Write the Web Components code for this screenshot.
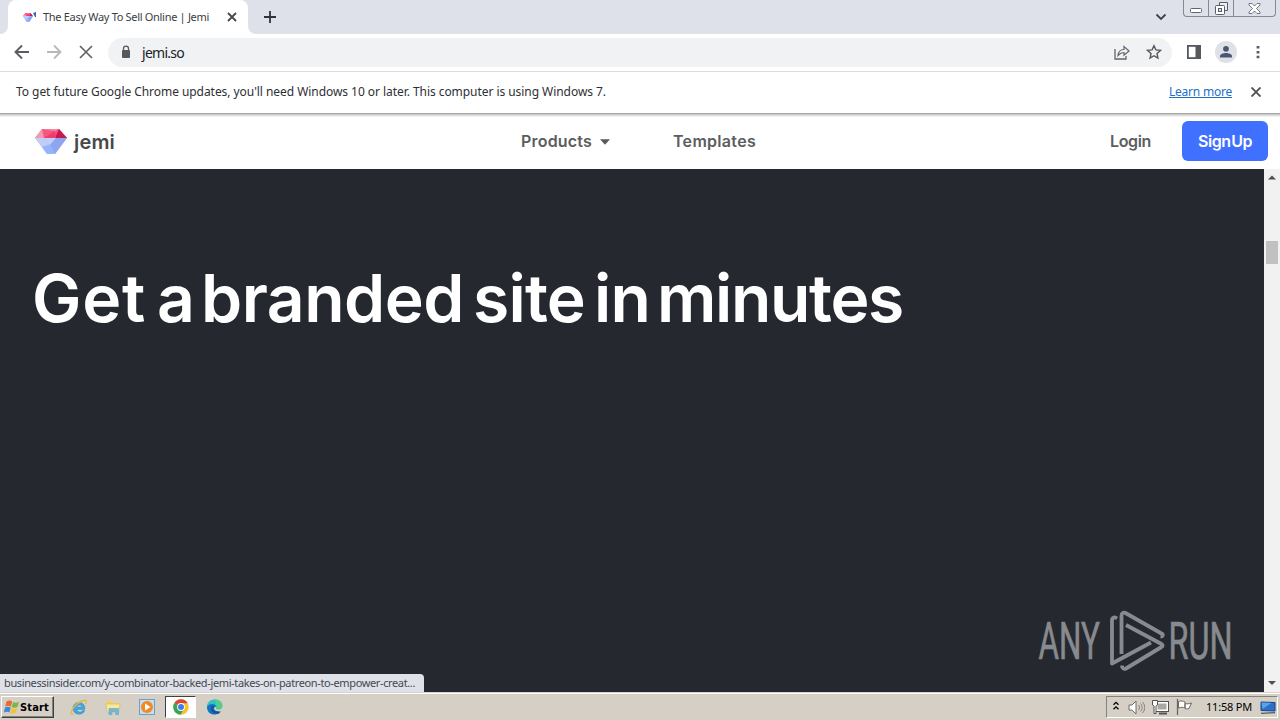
<!DOCTYPE html>
<html lang="en">
<head>
<meta charset="utf-8">
<title>The Easy Way To Sell Online | Jemi</title>
<style>
    body{
        margin: 0;
        width: 1280px;
        height: 720px;
        overflow: hidden;
        font-family: "Noto Sans", "DejaVu Sans", sans-serif;
        background: #fff;
    }
</style>
</head>
<body>
<desktop-screen>
    <browser-tabs>The Easy Way To Sell Online | Jemi</browser-tabs>
    <browser-toolbar>jemi.so</browser-toolbar>
    <info-bar></info-bar>
    <site-nav></site-nav>
    <site-hero>
        <fit-text width="114">Get</fit-text>
        <fit-text width="33">a</fit-text>
        <fit-text width="263">branded</fit-text>
        <fit-text width="112">site</fit-text>
        <fit-text width="56">in</fit-text>
        <fit-text width="246">minutes</fit-text>
    </site-hero>
    <task-bar></task-bar>
</desktop-screen>

<script>
// text run that spreads its letters over a given width
class FitText extends HTMLElement{
    constructor(){
        super();
        this.attachShadow({mode : 'open'});
        this.shadowRoot.innerHTML = `
            <style>
                :host{ display: block; flex: none; white-space: nowrap; }
                span{ display: inline-block; text-decoration: inherit; }
            </style>
            <span><slot></slot></span>
        `;
    }
    connectedCallback(){
        const span = this.shadowRoot.querySelector('span');
        const width = Number(this.getAttribute('width'));
        const slot = this.shadowRoot.querySelector('slot');
        const fit = () => {
            span.style.letterSpacing = '0px';
            const text = (this.getAttribute('chars') || this.textContent.trim()).length;
            const natural = span.getBoundingClientRect().width;
            if(natural && text) span.style.letterSpacing = (width - natural) / text + 'px';
            this.style.width = width + 'px';
        };
        slot.addEventListener('slotchange', fit);
        requestAnimationFrame(fit);
        fit();
    }
}

function define(name, html){
    const template = document.createElement('template');
    template.innerHTML = html;
    window.customElements.define(name, class extends HTMLElement{
        constructor(){
            super();
            this.attachShadow({mode : 'open'});
            this.shadowRoot.appendChild(template.content.cloneNode(true));
        }
    });
}

define('desktop-screen', `
    <style>
        :host{
            display: grid;
            grid-template-rows: 34px 38px 43px 54px 523px 28px;
            width: 1280px;
            height: 720px;
        }
    </style>
    <slot></slot>
`);

define('gem-icon', `
    <style>
        :host{ display: block; }
        svg{ display: block; width: 100%; height: 100%; }
    </style>
    <svg viewBox="0 0 32 25" preserveAspectRatio="none">
        <path d="M7 0h17l8 9H0z" fill="#f5577f"/>
        <path d="M7 0l2 9H0z" fill="#f39ab0"/>
        <path d="M7 0h17l-4 2z" fill="#f58aa5"/>
        <path d="M24 0l8 9H20z" fill="#c9184f"/>
        <path d="M20 2l-11 7h12z" fill="#ee3c6c"/>
        <path d="M0 9h32L20 25h-8z" fill="#a9bdf8"/>
        <path d="M0 9h9l5 6-7 3z" fill="#c3cdf4"/>
        <path d="M9 9h12l-6 7z" fill="#c0d0fb"/>
        <path d="M32 9L20 25l-5-9 6-7z" fill="#8ea5f0"/>
        <path d="M15 16l5 9h-8l-5-7z" fill="#94b5fb"/>
    </svg>
`);

define('browser-tabs', `
    <style>
        :host{ display: flex; background: #dee1e9; color: #3a3d42; }
        .before{ flex: none; width: 8px; background: #fff; }
        .before i{ display: block; height: 34px; background: #dee1e9; border-radius: 0 0 8px 0; }
        .tab{
            display: flex;
            align-items: center;
            box-sizing: border-box;
            width: 240px;
            padding-left: 15px;
            background: #fff;
            border-radius: 8px 8px 0 0;
            font-size: 11px;
        }
        .tab fit-text{ margin-top: -1px; }
        .tab gem-icon{ width: 10px; height: 9px; }
        .spark{ width: 4px; height: 6px; margin: -5px 6px 0 0; }
        .close{ margin-left: 18px; }
        .edge{ flex: none; background: #fff; width: 8px; }
        .edge i{ display: block; height: 34px; background: #dee1e9; border-radius: 0 0 0 8px; }
        .plus{ margin: 11px 0 0 8px; }
        .down{ margin: 13px 0 0 auto; }
        .win{
            display: flex;
            width: 91px;
            height: 16px;
            margin: 0 4px 0 16px;
            border: 1px solid #858890;
            border-top: 0;
            border-radius: 0 0 4px 4px;
        }
        .win div{ display: flex; justify-content: center; align-items: center; width: 24px; border-right: 1px solid #858890; }
        .win div:last-child{ flex: 1; border: 0; }
    </style>
    <div class="before"><i></i></div>
    <div class="tab">
        <gem-icon></gem-icon>
        <svg class="spark" viewBox="0 0 4 6"><path d="M0 1l3-1v5H2z" fill="#3569b8"/></svg>
        <fit-text width="166" chars="The Easy Way To Sell Online | Jemi"><slot></slot></fit-text>
        <svg class="close" width="10" height="10"><path d="M1 1l8 8M9 1l-8 8" stroke="#45484c" stroke-width="1.8"/></svg>
    </div>
    <div class="edge"><i></i></div>
    <svg class="plus" width="12" height="12"><path d="M6 0v12M0 6h12" stroke="#303338" stroke-width="1.8"/></svg>
    <svg class="down" width="12" height="8"><path d="M1.500 1.500L6 6l4.500-4.500" fill="none" stroke="#404348" stroke-width="1.8"/></svg>
    <div class="win">
        <div><svg width="12" height="5" style="margin-top:5px"><rect x=".5" y=".5" width="11" height="4" rx="1" fill="#fff" stroke="#60636c"/></svg></div>
        <div><svg width="13" height="13"><path d="M4.500 3.500v-3h8v8h-3" fill="#eceef2" stroke="#5a5d66"/><rect x=".5" y="3.500" width="9" height="9" rx="1" fill="#fff" stroke="#5a5d66"/><rect x="3.500" y="6.500" width="3" height="3" fill="#dee1e9" stroke="#5a5d66"/></svg></div>
        <div><svg width="13" height="11"><path d="M1 .5h3l2.500 2.500L9 .5h3v1.500L8.500 5.500 12 9v1.500H9L6.500 8 4 10.500H1V9l3.500-3.500L1 2z" fill="#fff" stroke="#666973" stroke-width=".9"/></svg></div>
    </div>
`);

define('browser-toolbar', `
    <style>
        :host{
            display: flex;
            align-items: center;
            box-sizing: border-box;
            padding: 0 13px 1px 14px;
            border-bottom: 1px solid #dcdde0;
            background: #fff;
            color: #202226;
        }
        .nav{ margin-right: 16px; }
        .address{
            display: flex;
            align-items: center;
            box-sizing: border-box;
            width: 1064px;
            height: 29px;
            margin-left: -2px;
            padding: 0 10px 0 12px;
            border-radius: 15px;
            background: #f0f2f4;
            font-size: 14px;
        }
        .address fit-text{ margin: 0 auto 0 10px; }
        .share{ margin-right: 16px; }
        .panel{ margin-left: 15px; }
        .avatar{ margin-left: 14px; }
        .menu{ margin-left: 19px; }
    </style>
    <svg class="nav" width="16" height="16"><path d="M15 8H2M8 1.500L1.500 8 8 14.500" fill="none" stroke="#5a5d61" stroke-width="1.900"/></svg>
    <svg class="nav" width="16" height="16"><path d="M1 8h13M8 1.500L14.500 8 8 14.500" fill="none" stroke="#b6b8bb" stroke-width="1.800"/></svg>
    <svg class="nav" width="16" height="16"><path d="M2 2l12 12M14 2L2 14" stroke="#5f6266" stroke-width="1.700"/></svg>
    <div class="address">
        <svg width="12" height="14"><rect x="2" y="5" width="8" height="8" rx="1" fill="#55585c"/><path d="M3.500 6V3.600a2.500 2.500 0 015 0V6" fill="none" stroke="#55585c" stroke-width="1.300"/></svg>
        <fit-text width="42" chars="jemi.so"><slot></slot></fit-text>
        <svg class="share" width="16" height="15"><path d="M1 4v10h11v-3" fill="none" stroke="#63666a" stroke-width="1.300"/><path d="M4 10.500C4.500 6.500 6.500 4.500 10 4.500V1.500l5 4.500-5 4.300V7.500c-2.500 0-4 .8-6 3z" fill="none" stroke="#63666a" stroke-width="1.200"/></svg>
        <svg width="16" height="16"><path d="M8 1.700l1.900 4.200 4.500.5-3.400 3.100.9 4.500L8 11.700 4.100 14l.9-4.500-3.400-3.100 4.500-.5z" fill="none" stroke="#55585c" stroke-width="1.400"/></svg>
    </div>
    <svg class="panel" width="14" height="14"><rect x=".9" y=".9" width="12.200" height="12.200" fill="#fff" stroke="#55585c" stroke-width="1.800"/><path d="M8.500 1H13v12H8.500z" fill="#55585c"/></svg>
    <svg class="avatar" width="22" height="22"><circle cx="11" cy="11" r="11" fill="#dee1e8"/><circle cx="11" cy="7.800" r="2.900" fill="#4a5672"/><path d="M5 16.500v-1.200C5 13 8.500 12 11 12s6 1 6 3.300v1.200z" fill="#4a5672"/></svg>
    <svg class="menu" width="4" height="14"><path d="M.6 1h2.800v2.500H.6zM.6 5.900h2.800v2.500H.6zM.6 10.800h2.800v2.500H.6z" fill="#5a5d61"/></svg>
`);

define('info-bar', `
    <style>
        :host{
            display: flex;
            align-items: center;
            box-sizing: border-box;
            padding: 0 19px 4px 16px;
            box-shadow: inset 0 -1px #c8c8c8, inset 0 -2px #aaa, 0 1px #e0e0e0, 0 2px #f1f1f1;
            position: relative;
            background: #fff;
            font-size: 12px;
            color: #2e3034;
        }
        .link{ margin-left: auto; color: #1f70c8; text-decoration: underline; }
        svg{ margin-left: 19px; }
    </style>
    <fit-text width="590">To get future Google Chrome updates, you'll need Windows 10 or later. This computer is using Windows 7.</fit-text>
    <fit-text class="link" width="63">Learn more</fit-text>
    <svg width="10" height="10"><path d="M.5 .5l9 9M9.500 .5l-9 9" stroke="#505356" stroke-width="1.900"/></svg>
`);

define('site-nav', `
    <style>
        :host{
            display: flex;
            align-items: center;
            box-sizing: border-box;
            padding: 0 12px 2px 35px;
            background: #fff;
            font: 600 16px/24px Inter, sans-serif;
            color: #5c5d60;
        }
        gem-icon{ width: 32px; height: 25px; margin-top: 1px; }
        .brand{ margin: 2px 0 0 7px; font-size: 20px; color: #47484b; }
        .products{ margin-left: 406px; }
        .caret{ margin: 1px 63px 0 8px; }
        .login{ margin-left: auto; }
        .sign{
            display: flex;
            justify-content: center;
            align-items: center;
            width: 86px;
            height: 40px;
            margin-left: 31px;
            border-radius: 6px;
            background: #4070ff;
            color: #fff;
            word-spacing: -3px;
        }
    </style>
    <gem-icon></gem-icon>
    <fit-text class="brand" width="41">jemi</fit-text>
    <fit-text class="products" width="71">Products</fit-text>
    <svg class="caret" width="10" height="6"><path d="M0 .3h10L5 5.800z" fill="#58595c"/></svg>
    <fit-text width="83">Templates</fit-text>
    <fit-text class="login" width="41">Login</fit-text>
    <div class="sign"><fit-text width="54">Sign Up</fit-text></div>
`);

define('scroll-bar', `
    <style>
        :host{ display: flex; flex-direction: column; align-items: center; width: 16px; background: #f1f1f1; }
        svg{ flex: none; display: block; }
        .up{ margin-top: 5px; }
        .thumb{ width: 12px; height: 23px; margin-top: 61px; background: #c1c1c1; }
        .down{ margin: auto 0 6px; }
    </style>
    <svg class="up" width="8" height="6"><path d="M0 5.500h8L4 1.500z" fill="#505050"/></svg>
    <div class="thumb"></div>
    <svg class="down" width="8" height="6"><path d="M0 1h8L4 5z" fill="#505050"/></svg>
`);

define('any-run', `
    <style>
        :host{ display: block; width: 220px; height: 76px; }
        svg{ display: block; }
        text{ font-family: Roboto, sans-serif; font-size: 51px; font-weight: 400; fill: #878a8e; stroke: #878a8e; stroke-width: .7px; }
    </style>
    <svg width="220" height="76" viewBox="1025 602 220 76">
        <text transform="translate(1038.500 659) scale(.615 1)">ANY</text>
        <g fill="none" stroke="#878a8e" stroke-width="3.800" stroke-linejoin="round">
            <path d="M1117 618.500c-3-2-5-1-5 2v43l39-21"/>
            <path d="M1121.500 654v-38c0-3 2-4 4-3l36 20.500c2 1 1.500 3-1 3"/>
            <path d="M1126 625l35.500 19c1.500 1 1.500 2 0 3l-35.500 21.500c-2 1-4 0-4-3"/>
        </g>
        <text transform="translate(1168.500 659) scale(.635 1)">RUN</text>
    </svg>
`);

define('site-hero', `
    <style>
        :host{ display: grid; grid-template-columns: 1264px 16px; position: relative; }
        .page{ box-sizing: border-box; padding: 89px 0 0 32px; background: #25282f; }
        h1{
            display: grid;
            grid-template-columns: 125px 44px 272px 121px 63px 246px;
            margin: 0;
            font: 600 66px/80px Inter, sans-serif;
            color: #fff;
        }
        any-run{ position: absolute; left: 1025px; top: 433px; }
        .status{
            position: absolute;
            left: 0;
            bottom: 0;
            box-sizing: border-box;
            width: 424px;
            height: 18px;
            padding-left: 4px;
            border-radius: 0 4px 0 0;
            background: #dee1e8;
            font-size: 11px;
            line-height: 18px;
            color: #45484e;
        }
    </style>
    <div class="page"><h1><slot></slot></h1></div>
    <scroll-bar></scroll-bar>
    <any-run></any-run>
    <div class="status"><fit-text width="411">businessinsider.com/y-combinator-backed-jemi-takes-on-patreon-to-empower-creat...</fit-text></div>
`);

define('task-bar', `
    <style>
        :host{
            display: flex;
            align-items: center;
            box-sizing: border-box;
            padding: 1px 2px 0 1px;
            border-top: 1px solid #d8d4cc;
            box-shadow: inset 0 1px #fff;
            background: #d5cfc6;
            font-size: 11px;
            color: #000;
        }
        .start{
            display: flex;
            align-items: center;
            box-sizing: border-box;
            width: 53px;
            height: 22px;
            padding-left: 2px;
            border: 1px solid;
            border-color: #fff #404040 #404040 #fff;
            box-shadow: inset -1px -1px #85827c;
            font: bold 11px "DejaVu Sans Condensed", "Noto Sans", sans-serif;
        }
        .app{ display: flex; justify-content: center; align-items: center; width: 34px; height: 22px; }
        .first{ margin-left: 8px; }
        .active{
            box-sizing: border-box;
            width: 31px;
            margin: 0 2px 0 1px;
            border: 1px solid;
            border-color: #404040 #fff #fff #404040;
            background: #fff;
        }
        .last{ width: 32px; }
        .tray{
            display: flex;
            align-items: center;
            box-sizing: border-box;
            width: 172px;
            height: 22px;
            margin-left: auto;
            padding-left: 6px;
            border: 1px solid;
            border-color: #85827c #fff #fff #85827c;
        }
        .tray fit-text{ margin: -1px 0 0 13px; }
    </style>
    <div class="start">
        <svg width="16" height="16"><path d="M2.500 2.500C5 .8 7 1.500 8.200 2.500L6.800 7.500C5 6.300 3 6.500 1.200 7.500z" fill="#ee6734"/><path d="M9 3c2 1.200 4 1 6-.3l-1.500 5C11.500 9 9.500 8.800 7.600 7.900z" fill="#79b943"/><path d="M1 8.500c2-1.200 4-1 5.700 0L5.300 13.500C4 12.500 2 12.300-.2 13.500z" fill="#3f88d0"/><path d="M7.500 8.900c2 1.200 4 1 5.900-.2L12 13.500c-2 1.500-4 1.200-5.900.4z" fill="#f4c33c"/></svg>
        <fit-text width="29">Start</fit-text>
    </div>
    <div class="app first"><svg width="18" height="17"><path d="M14.500 10.500H7c.4 3 4.500 3.200 5.500 1h2.300C13 17 3 16.500 3 9.200 3 1.500 15 1.500 15 9.500zM7 8h4.800C11.500 5.300 7.500 5.300 7 8z" fill="#43a6df" stroke="#237fb9" stroke-width=".4" fill-rule="evenodd"/><path d="M3.500 15C-3 17 5 3.500 13.500 1.500c3-.6 3.500 1 2 3.500" fill="none" stroke="#e5b83d" stroke-width="1.300"/></svg></div>
    <div class="app"><svg width="16" height="16"><path d="M1 2h6l1 2h6v3H1z" fill="#f3cf69"/><path d="M1 5h14l-1 8H2z" fill="#f9e79b" stroke="#d9b552" stroke-width=".6"/><path d="M4 15.500V9.500h9.500v6h-2.700v-3H6.800v3z" fill="#72b8dd" stroke="#559bc4" stroke-width=".5"/></svg></div>
    <div class="app"><svg width="16" height="16"><rect x=".5" y=".5" width="15" height="15" fill="#c4dff3" stroke="#69a0cc"/><circle cx="8" cy="8" r="6" fill="#f38a20"/><path d="M6 4.500l5.500 3.500L6 11.500z" fill="#fff"/></svg></div>
    <div class="app active"><svg width="16" height="16"><circle cx="8" cy="8" r="7.700" fill="#f5c52d"/><path d="M8 8L1.300 4.100A7.700 7.700 0 0114.700 4.200H8z" fill="#df4536"/><path d="M8 8L1.300 4.100A7.700 7.700 0 007.500 15.700L11 10z" fill="#37a455"/><circle cx="8" cy="8" r="3.900" fill="#fff"/><circle cx="8" cy="8" r="3" fill="#3f7fe5"/></svg></div>
    <div class="app last"><svg width="17" height="16"><path d="M1 9C0 2 7-1 12 1c4 1.600 5 5.500 4 7.800-1 2-4 2-6 1.300 1-4-4-5.800-9-1.100z" fill="#34bfc2"/><path d="M9 .3c4 0 7.500 3 7.400 6.500 0 2.800-3 4.200-6.200 3.300C11 6.500 9.500 2.500 9 .3z" fill="#55cc87"/><path d="M1 8c2-4 8-4 9.500-.6C6.500 8 7 13 14.500 12.500 10 18 1 16 1 8z" fill="#1272c5"/><path d="M6 7c-3 4 1 8 6 8 1.200-.5 2-1.500 2.700-2.500C9 13.500 5.500 10.500 8.500 7z" fill="#155397"/></svg></div>
    <div class="tray">
        <svg width="6" height="10" style="margin-top:-2px"><path d="M.5 3.800L3 1.300l2.500 2.500M.5 8.300L3 5.800l2.500 2.500" fill="none" stroke="#000" stroke-width="1.300"/></svg>
        <svg width="17" height="15" style="margin-left:9px"><path d="M1 5h3l4-4v13l-4-4H1z" fill="#fff" stroke="#6e6c68"/><path d="M10.500 5c1.300 1.500 1.300 3.500 0 5M12.500 3.500c2.200 2.300 2.200 5.700 0 8M14.500 2c3 3.500 3 7.500 0 11" fill="none" stroke="#77746e" stroke-width=".9"/></svg>
        <svg width="17" height="16" style="margin-left:7px"><rect x="4.500" y="3.500" width="11" height="8" fill="#aaa8a2" stroke="#fff" stroke-width="2"/><rect x="3.500" y="2.500" width="13" height="10" fill="none" stroke="#55534f"/><path d="M7 14.500h8" stroke="#55534f" stroke-width="2"/><path d="M.5 1.500h5V6L4 7v7.500H2V7L.5 6z" fill="#fff" stroke="#55534f"/></svg>
        <svg width="17" height="16" style="margin-left:7px"><path d="M2.500 2.500C5 1.500 7 2 9 3v6C7 8 5 8.200 2.500 9zM9 4.500c2 .6 4 .4 6.500-.5L13 9.500c-1.500.6-3 .5-4 0z" fill="#fff" stroke="#6b6964"/><path d="M1.500 0v16" stroke="#6b6964" stroke-width="1.300"/></svg>
        <fit-text width="46">11:58 PM</fit-text>
        <svg width="16" height="13" style="margin-left:8px"><path d="M1 1l14 .5V10L1 9.500z" fill="#2c70c9" stroke="#194487"/><path d="M1.500 1.500l10 .5-9 6z" fill="#5aa3e8"/><path d="M1 12.300l14-.6" stroke="#2d3c55"/></svg>
    </div>
`);

window.customElements.define('fit-text', FitText);
</script>
</body>
</html>
